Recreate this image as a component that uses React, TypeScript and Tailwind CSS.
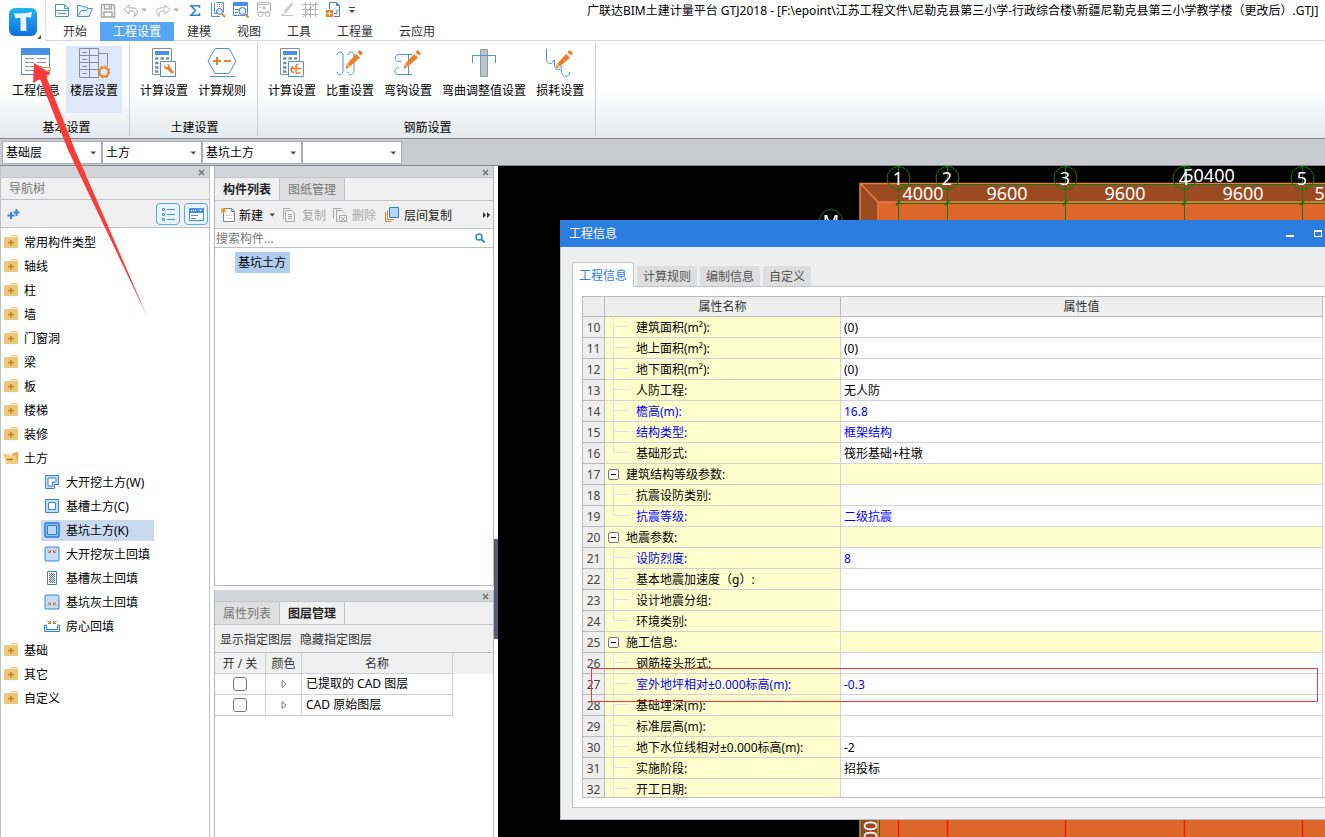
import clsx from "clsx";
import { useState } from "react";
import type { ReactNode } from "react";

const BLUE = "#4a90e2";
const ORANGE = "#f07d28";

/* ---------- quick access icons ---------- */

function Glyph({ children, size = 16 }: { children: ReactNode; size?: number }) {
  return (
    <svg width={size} height={size} viewBox={`0 0 ${size} ${size}`} fill="none" className="shrink-0" aria-hidden>
      {children}
    </svg>
  );
}

function Caret({ color = "#444" }: { color?: string }) {
  return (
    <svg width="8" height="8" viewBox="0 0 8 8" className="shrink-0" aria-hidden>
      <path d="M1.500 2.500h5.500L4.250 5.500z" fill={color} />
    </svg>
  );
}

const quickIcons: { name: string; icon: ReactNode; caret?: boolean }[] = [
  {
    name: "新建",
    icon: (
      <g stroke={BLUE}>
        <path d="M1.500 3.500h9l4 4v8h-13z" fill="#fff" />
        <path d="M10.500 3.500v4h4" />
        <path d="M1.500 9.500h13M4 12.500h8" />
      </g>
    ),
  },
  {
    name: "打开",
    icon: (
      <g stroke={BLUE}>
        <path d="M.5 15.500v-11h4l1 1.500h5v3" />
        <path d="M.5 15.500l3.500-6h5l1.500-2h5l-3.500 8z" fill="#e8f2ff" />
      </g>
    ),
  },
  {
    name: "保存",
    icon: (
      <g stroke="#a8a8a8" strokeWidth="1.500">
        <path d="M2 3.500h11l1.500 1.500v11h-13v-12z" />
        <path d="M4.500 4v4h7v-4M4 16v-5h8v5" />
        <path d="M9.500 4v3" />
      </g>
    ),
  },
  {
    name: "撤销",
    caret: true,
    icon: <path d="M6 4L1 8.500 6 13v-3c4-.5 6 .5 6 3 0 1-.5 2-1 2.500 3-2 4-4 3-6.500C13 7 10 6.500 6 7z" stroke="#a8a8a8" />,
  },
  {
    name: "恢复",
    caret: true,
    icon: <path d="M10 4l5 4.500L10 13v-3c-4-.5-6 .5-6 3 0 1 .5 2 1 2.500-3-2-4-4-3-6.500C3 7 6 6.500 10 7z" stroke="#b4b4b4" />,
  },
  {
    name: "汇总计算",
    icon: <path d="M12.500 7V4.800H4L8.500 9.500 4 14.200h8.500V12" stroke="#2f7fd8" strokeWidth="1.600" />,
  },
  {
    name: "查看计算式",
    icon: (
      <g>
        <path d="M1.500 2v13.500H10M4.500 2v10.500h3" stroke={BLUE} />
        <path d="M5.500 1.500h8v10" stroke={BLUE} />
        <path d="M7 3.500h5M7 5.500h5" stroke={ORANGE} strokeDasharray="1 1" />
        <circle cx="9.500" cy="10.500" r="3" fill="#dcecff" stroke="#4577b8" />
        <path d="M12 13l3 3" stroke={ORANGE} strokeWidth="2" />
      </g>
    ),
  },
  {
    name: "查看报表",
    icon: (
      <g>
        <path d="M.5 1.500h14v13H.5z" fill="#fff" stroke={BLUE} />
        <path d="M0 1h15v4H0z" fill={BLUE} />
        <path d="M2 8.500h4M2 11.500h3" stroke={BLUE} />
        <circle cx="9.500" cy="10" r="3.500" fill="#e4f0ff" stroke="#4577b8" />
        <path d="M12 13l3.500 3.500" stroke={ORANGE} strokeWidth="2" />
      </g>
    ),
  },
  {
    name: "云检查",
    icon: (
      <g stroke="#b8b8b8">
        <path d="M1.500 10V1.500h13V10M1.500 3.500h13M8 5v4M6 7h4M3 6.500h2" />
        <circle cx="4.500" cy="13" r="2.500" />
        <circle cx="11.500" cy="13" r="2.500" />
        <path d="M1 11.500h13" />
      </g>
    ),
  },
  {
    name: "编辑",
    icon: (
      <g stroke="#c4c4c4">
        <path d="M14 3L7.500 11l-2 1 .5-2.500L12.500 2" fill="#d4d4d4" />
        <path d="M3 14.500h11M5 12.500l-3 2" />
      </g>
    ),
  },
  {
    name: "轴网",
    icon: (
      <path d="M3.500 1v15M8.500 1v15M13.500 1v15M0 3.500h16M0 8.500h16M0 13.500h16M1 16l6-8 8-6" stroke="#b4b4b4" />
    ),
  },
  {
    name: "新增图纸",
    icon: (
      <g>
        <path d="M4.500 8V1.500h7l3 3v11H9" stroke="#4a7cb0" />
        <path d="M11.500 1.500v3h3" fill={BLUE} stroke={BLUE} />
        <path d="M12 8.500v4h-3" stroke="#4a7cb0" />
        <rect x="1" y="9" width="7" height="7" fill={ORANGE} />
        <path d="M4.500 10v5M2 12.500h5" stroke="#fff" />
      </g>
    ),
  },
];

/* ---------- ribbon icons, 32 x 32 ---------- */

const pencil = (
  <g>
    <path d="M13 17l9-10 4 3.500-10 9z" fill={ORANGE} />
    <path d="M11.500 22l1-4.500 3 2.500z" fill={ORANGE} />
    <path d="M23.500 5.500l2-2.500 3.500 3-2 2.500z" fill={ORANGE} />
  </g>
);

const calculator = (
  <g>
    <path d="M4.500 1.500h19v26h-19z" stroke="#80929c" fill="#fff" />
    <path d="M7 4h14v4H7z" fill={BLUE} />
    <path d="M7 11.500h14M7 16h14M7 20.500h14M7 24.500h14" stroke="#80929c" strokeWidth="2.500" strokeDasharray="3.500 2" />
    <path d="M12.500 14.500h15v15h-15z" fill="#fff" stroke={BLUE} />
  </g>
);

const ribbonIcons: Record<string, ReactNode> = {
  info: (
    <g>
      <path d="M1.500 3.500h28v24h-28z" fill="#fff" stroke={BLUE} />
      <path d="M1 1h29v7H1z" fill="#4a90e2" />
      <path d="M5 11.500h9M5 15.500h9M5 19.500h9M5 23.500h9M17 11.500h9M17 15.500h9M17 19.500h5" stroke="#8c9aa4" />
      <path d="M22 20.500h8v3h-2v6h-6z" fill="#fff" stroke="#e8862f" />
    </g>
  ),
  floor: (
    <g>
      <path d="M1.500 1.500h19v29h-19zM1.500 8.500h19M1.500 15.500h19M1.500 22.500h19M11.500 1.500v29" stroke="#80929c" />
      <path d="M4 5.500h5M4 12.500h5M4 19.500h5M4 26.500h5" stroke="#80929c" />
      <path d="M20.500 6.500h9v13" stroke="#80929c" />
      <circle cx="26" cy="25" r="4.500" stroke="#e8862f" strokeWidth="2" fill="#dfe9f8" />
      <circle cx="26" cy="25" r="5.500" stroke="#e8862f" strokeWidth="2" strokeDasharray="2 2.300" />
    </g>
  ),
  calcWrench: (
    <g>
      {calculator}
      <path d="M16 18l2.500 2.500 2-2-2-1.500c2-.5 4 1 3.500 3.500l4 4.500-2 2-4.500-4.500c-2.500.5-4-1.500-3.500-4.500z" fill={ORANGE} />
    </g>
  ),
  rule: (
    <g>
      <path d="M9 1.500h14l7 12.500-7 12.500H9L2 14z" fill="#fff" stroke={BLUE} />
      <path d="M7 14h8M11 10v8M18 14h7" stroke={ORANGE} strokeWidth="2" />
      <path d="M4 29.500h25" stroke={BLUE} />
    </g>
  ),
  calcHook: (
    <g>
      {calculator}
      <path d="M15 21.500h10.500M17 19l-2 2.500c0 3 1.500 4 3 4M22.500 17.500c-2-.5-2.500.5-2.500 2v5.500c0 2 3 2 4 0" stroke={ORANGE} strokeWidth="1.500" />
    </g>
  ),
  weight: (
    <g>
      <path d="M3 8c0-4 6-4 6 0v15c0 6-6 6-6 2M14 8c0-4 6-4 6 0v15c0 6-6 6-6 2" stroke={BLUE} />
      {pencil}
    </g>
  ),
  hook: (
    <g>
      <path d="M20 7.500H7c-5 0-5 7 0 7h2M20 27.500H7c-6 0-5-7 0-7M16.500 8v19" stroke={BLUE} />
      {pencil}
    </g>
  ),
  bend: (
    <g>
      <path d="M12.500 2.500h7v27h-7z" fill="#bcc4c8" stroke="#8c9aa4" />
      <path d="M4.500 16V8.500h23V16" stroke={BLUE} />
    </g>
  ),
  loss: (
    <g>
      <path d="M2.500 2v10c0 6 7 6 7 1M10.500 13v5c0 6 7 6 7 1M17.500 22v2c0 7 8 7 8 1" stroke={BLUE} />
      {pencil}
    </g>
  ),
};

const ribbonGroups = [
  {
    title: "基本设置",
    items: [
      { label: "工程信息", icon: "info" },
      { label: "楼层设置", icon: "floor", active: true },
    ],
  },
  {
    title: "土建设置",
    items: [
      { label: "计算设置", icon: "calcWrench" },
      { label: "计算规则", icon: "rule" },
    ],
  },
  {
    title: "钢筋设置",
    items: [
      { label: "计算设置", icon: "calcHook" },
      { label: "比重设置", icon: "weight" },
      { label: "弯钩设置", icon: "hook" },
      { label: "弯曲调整值设置", icon: "bend" },
      { label: "损耗设置", icon: "loss" },
    ],
  },
];

const menuTabs = ["开始", "工程设置", "建模", "视图", "工具", "工程量", "云应用"];

function Header() {
  const [tab, setTab] = useState("工程设置");
  return (
    <header>
      <div className="flex h-[41px] bg-white">
        <div className="relative w-[46px] shrink-0 border-r border-gray-200 pt-2 pl-2">
          <svg width="30" height="30" viewBox="0 0 30 30" aria-label="GTJ2018">
            <defs>
              <linearGradient id="logo" x1="0" y1="0" x2="0" y2="1">
                <stop offset="0" stopColor="#23b3f5" />
                <stop offset="1" stopColor="#0f6fdc" />
              </linearGradient>
            </defs>
            <rect x="1" width="28" height="28" rx="6" fill="url(#logo)" />
            <path d="M6 5c4 1 14 0 18-1l-1 5.500c-1.500-.5-3-.5-5 0l.5 13.500h-6L12.500 10c-1.500 0-3.500 0-5 .5z" fill="#e9f6ff" />
          </svg>
          <svg width="4" height="4" viewBox="0 0 4 4" className="absolute right-1 bottom-[2px]" aria-hidden>
            <path d="M4 0v4H0z" fill="#555" />
          </svg>
        </div>
        <div className="flex min-w-0 flex-1 flex-col">
          <div className="flex h-[22px] items-start pl-2">
            <div className="flex w-[533px] shrink-0 gap-[7px] pt-px">
              {quickIcons.map((q) => (
                <button key={q.name} type="button" title={q.name} className="flex items-center gap-px">
                  <svg width="16" height="18" viewBox="0 0 16 18" fill="none" aria-hidden>
                    {q.icon}
                  </svg>
                  {q.caret && <Caret color="#aaa" />}
                </button>
              ))}
              <button type="button" title="更多" className="flex items-center">
                <svg width="8" height="8" viewBox="0 0 8 8" aria-hidden>
                  <path d="M1 1.500h6" stroke="#444" />
                  <path d="M1 4h6L4 7z" fill="#444" />
                </svg>
              </button>
            </div>
            <h1 className="truncate overflow-clip pt-[3px] leading-4 text-clip whitespace-nowrap">
              广联达BIM土建计量平台 GTJ2018 - [F:\epoint\江苏工程文件\尼勒克县第三小学-行政综合楼\新疆尼勒克县第三小学教学楼（更改后）.GTJ]
            </h1>
          </div>
          <nav className="flex h-[19px] border-b border-[#d5d7da] pl-1">
            {menuTabs.map((t) => (
              <button
                key={t}
                type="button"
                onClick={() => setTab(t)}
                className={clsx("h-[19px] px-[13px] leading-[19px]", tab === t ? "bg-[#57a5f7] text-white" : "text-[#333]")}
              >
                {t}
              </button>
            ))}
          </nav>
        </div>
      </div>

      <div className="flex h-[98px] border-b border-[#85898d] bg-linear-to-b from-white from-50% to-[#e6eaec] pl-[2px]">
        {ribbonGroups.map((g) => (
          <section key={g.title} className="my-[2px] flex flex-col border-r border-[#cdd0d3] pt-[3px] pr-[5px] pl-[6px]">
            <div className="flex gap-[2px] pr-[2px]">
              {g.items.map((it) => (
                <button
                  key={it.icon}
                  type="button"
                  className={clsx("flex h-[67px] flex-col items-center px-1 pt-px", it.active && "bg-[#dde8f8]")}
                >
                  <svg width="32" height="32" viewBox="0 0 32 32" fill="none" aria-hidden>
                    {ribbonIcons[it.icon]}
                  </svg>
                  <span className="mt-1 leading-4 whitespace-nowrap">{it.label}</span>
                </button>
              ))}
            </div>
            <p className="mt-[7px] pl-px text-center leading-4">{g.title}</p>
          </section>
        ))}
      </div>
    </header>
  );
}

const filters = [
  { label: "楼层", value: "基础层" },
  { label: "构件大类", value: "土方" },
  { label: "构件类型", value: "基坑土方" },
  { label: "构件", value: "" },
];

function FilterBar() {
  return (
    <div className="flex h-[27px] border-b border-[#85898d] bg-[#c9cbd0] pt-[2px] pl-[2px]">
      {filters.map((f) => (
        <div key={f.label} className="relative h-[23px] w-[100px]">
          <select aria-label={f.label} className="h-full w-full appearance-none border border-[#a9acb2] bg-white pl-[3px]">
            <option>{f.value}</option>
          </select>
          <span className="pointer-events-none absolute top-2 right-[5px]">
            <Caret />
          </span>
        </div>
      ))}
    </div>
  );
}

function DockBar() {
  return (
    <div className="flex h-3 shrink-0 items-center justify-end border-b border-[#c2c5ca] bg-[#d3d5da] pt-px pr-1">
      <button type="button" aria-label="关闭">
        <svg width="7" height="7" viewBox="0 0 7 7" className="block" aria-hidden>
          <path d="M1 1l5 5M6 1L1 6" stroke="#777" strokeWidth="1.500" />
        </svg>
      </button>
    </div>
  );
}

/* ---------- navigation tree ---------- */

function Folder({ open }: { open?: boolean }) {
  return open ? (
    <Glyph>
      <path d="M10 3l5.500-1-1 12H5z" fill="#e3ad50" />
      <path d="M0 4h6l1 1.500h6l1.500 8.500H3z" fill="#f3cd83" />
      <path d="M4 9.500h6" stroke="#a67c1e" strokeWidth="1.500" />
    </Glyph>
  ) : (
    <Glyph>
      <path d="M8 1h6l1 1.500H8z" fill="#f1cb80" />
      <rect x="1" y="3" width="14" height="11" rx="1" fill="#efc779" />
      <path d="M8 6v5.500M5 8.700h6" stroke="#c08f2c" strokeWidth="1.800" />
    </Glyph>
  );
}

const inward = "M3.500 3.500l3 3M6.500 4v2.500H4M12.500 3.500l-3 3M9.500 4v2.500H12";

const earthwork: { label: string; icon: ReactNode }[] = [
  {
    label: "大开挖土方(W)",
    icon: (
      <g stroke="#3b83d4" fill="#c5dffa">
        <path d="M1.500 1.500h13v9h-4v4h-9z" />
        <path d="M4 4h8v4H8.500v4H4z" fill="#fff" />
      </g>
    ),
  },
  {
    label: "基槽土方(C)",
    icon: (
      <g stroke="#3b83d4" fill="#c5dffa">
        <path d="M1.500 1.500h13v13h-13z" />
        <path d="M4.500 4.500h7v7h-7z" fill="#fff" />
      </g>
    ),
  },
  {
    label: "基坑土方(K)",
    icon: (
      <g stroke="#2f7dd6" fill="#8fc0f5">
        <rect x="1" y="1" width="14" height="14" rx="1" strokeWidth="1.500" />
        <path d="M3.500 3.500h9v9h-9z" fill="#b9dafc" />
      </g>
    ),
  },
  {
    label: "大开挖灰土回填",
    icon: (
      <g>
        <rect x="1" y="1" width="14" height="14" rx="1" fill="#c5dffa" stroke="#3b83d4" />
        <path d={inward} stroke="#d96c2c" />
      </g>
    ),
  },
  {
    label: "基槽灰土回填",
    icon: (
      <g>
        <path d="M3.500 1.500h9v13h-9z" fill="#fff" stroke="#3b83d4" />
        <path d="M5.500 3v10M7.500 3v10M9.500 3v10" stroke="#456d9e" strokeDasharray="1 1" />
        <path d="M6.500 4v9M8.500 4v9M10.500 4v9" stroke="#456d9e" strokeDasharray="1 1" />
      </g>
    ),
  },
  {
    label: "基坑灰土回填",
    icon: (
      <g>
        <rect x="1" y="1" width="14" height="14" rx="1" fill="#c5dffa" stroke="#3b83d4" />
        <path d="M3.500 12l3-3M4 9h2.500v2.500M12.500 12l-3-3M12 9H9.500v2.500" stroke="#d96c2c" />
      </g>
    ),
  },
  {
    label: "房心回填",
    icon: (
      <g>
        <path d="M.5 7v6.500h15V7h-2v4.500h-11V7z" fill="#dcecff" stroke="#3b83d4" />
        <path d="M3.500 2.500l3 3M6.500 3v2.500H4M12.500 2.500l-3 3M9.500 3v2.500H12" stroke="#d96c2c" />
      </g>
    ),
  },
];

const categories = ["常用构件类型", "轴线", "柱", "墙", "门窗洞", "梁", "板", "楼梯", "装修", "土方", "基础", "其它", "自定义"];

function NavTree() {
  const [selected, setSelected] = useState("基坑土方(K)");
  return (
    <aside className="flex w-[210px] shrink-0 flex-col border-x border-[#bfc2c8] bg-white">
      <DockBar />
      <h2 className="h-[22px] shrink-0 border-b border-[#bfc2c8] bg-[#f0f0f0] pl-2 leading-[22px] text-[#777]">导航树</h2>
      <div className="flex h-7 shrink-0 items-center gap-1 border-b border-[#bfc2c8] bg-[#f0f0f0] pr-px pl-[6px]">
        <button type="button" aria-label="展开" className="mr-auto">
          <Glyph>
            <path d="M4 6v7M.5 9.500h7M9.500 3v7M6.500 6.500h6" stroke="#3b83d4" strokeWidth="2" />
          </Glyph>
        </button>
        <button type="button" aria-label="列表视图" className="flex h-[22px] w-6 items-center justify-center rounded-sm border border-[#58a6f0] bg-[#eaf4ff]">
          <Glyph>
            <path d="M2.500 2.500h2v2h-2zM2.500 7.500h2v2h-2zM2.500 12.500h2v2h-2zM7 3.500h8M7 8.500h8M7 13.500h8" stroke={BLUE} />
          </Glyph>
        </button>
        <button type="button" aria-label="窗口视图" className="flex h-[22px] w-6 items-center justify-center rounded-sm border border-[#58a6f0] bg-[#eaf4ff]">
          <Glyph>
            <path d="M1.500 2.500h14v12h-14z" fill="#fff" stroke={BLUE} />
            <path d="M1 2h15v5H1z" fill={BLUE} />
            <path d="M3 4.500h6" stroke="#fff" strokeDasharray="1 1" />
            <path d="M11 3.500h3l-1.500 2z" fill="#fff" />
            <path d="M3 9.500h7M3 12.500h5" stroke={BLUE} />
          </Glyph>
        </button>
      </div>
      <ul className="min-h-0 flex-1 overflow-hidden pt-[2px]">
        {categories.map((c) => (
          <li key={c}>
            <button type="button" className="flex h-6 items-center gap-[5px] pl-[2px] whitespace-nowrap">
              <Folder open={c === "土方"} />
              <span className="pt-[2px]">{c}</span>
            </button>
            {c === "土方" && (
              <ul className="pl-10">
                {earthwork.map((e) => (
                  <li key={e.label} className="flex h-6 items-center">
                    <button
                      type="button"
                      onClick={() => setSelected(e.label)}
                      className={clsx(
                        "flex h-[21px] min-w-[113px] items-center gap-[6px] pl-[3px] whitespace-nowrap",
                        selected === e.label && "bg-[#c9d9f0]",
                      )}
                    >
                      <Glyph>{e.icon}</Glyph>
                      <span className="pt-[2px]">{e.label}</span>
                    </button>
                  </li>
                ))}
              </ul>
            )}
          </li>
        ))}
      </ul>
    </aside>
  );
}

/* ---------- component list and layers ---------- */

function PanelTabs({ tabs, active }: { tabs: string[]; active: string }) {
  return (
    <div className="flex h-[23px] shrink-0 border-b border-[#bfc2c8] bg-[#f0f0f0]">
      {tabs.map((t) => (
        <button
          key={t}
          type="button"
          className={clsx(
            "w-[65px] border-r border-[#bfc2c8] pt-[2px]",
            t === active ? "font-bold text-[#222]" : "bg-[#dfdfe0] text-[#777]",
          )}
        >
          {t}
        </button>
      ))}
    </div>
  );
}

function ComponentPanel() {
  return (
    <section className="flex min-h-0 flex-1 flex-col border-x border-b border-[#b4b6ba] bg-white">
      <DockBar />
      <PanelTabs tabs={["构件列表", "图纸管理"]} active="构件列表" />
      <div className="flex h-7 shrink-0 items-center border-b border-[#bfc2c8] bg-[#f0f0f0] pr-[2px] pl-[5px] whitespace-nowrap">
        <button type="button" className="mr-[6px] flex items-center gap-[3px]">
          <Glyph>
            <path d="M3.500 1.500h8l3 3v10h-11z" fill="#fff" stroke="#78858f" />
            <path d="M11.500 1.500v3h3" stroke="#78858f" />
            <path d="M6 8.500h6M6 11.500h6" stroke="#d3d8dc" />
            <path d="M1 1l5 5M6 1L1 6M3.500 1v5M1 3.500h5" stroke="#f0941f" />
          </Glyph>
          <span className="pt-[2px]">新建</span>
          <span className="pl-[2px]">
            <Caret />
          </span>
        </button>
        <button type="button" disabled className="mr-[6px] flex items-center gap-1 text-[#a9a9a9]">
          <Glyph>
            <path d="M1.500 12.500v-11h7" stroke="#a9a9a9" />
            <path d="M3.500 3.500h6l3 3v8h-9zM6 7.500h4M6 9.500h4M6 11.500h4" stroke="#a9a9a9" />
          </Glyph>
          <span className="pt-[2px]">复制</span>
        </button>
        <button type="button" disabled className="mr-2 flex items-center gap-1 text-[#a9a9a9]">
          <Glyph>
            <path d="M1.500 11.500v-10h8M4 3.500h6l3 3M4.500 3.500v11h2" stroke="#a9a9a9" />
            <path d="M7.500 8.500h7v6h-7zM9 10l4 4M13 10l-4 4" stroke="#a9a9a9" />
          </Glyph>
          <span className="pt-[2px]">删除</span>
        </button>
        <button type="button" className="mr-auto flex items-center gap-1 text-[#222]">
          <Glyph>
            <path d="M1.500 5v9.500h6" stroke={ORANGE} />
            <path d="M3.500 3v9.500h6" stroke={ORANGE} />
            <path d="M5.500.5h9v10h-9z" fill="#b5d6fb" stroke="#3b83d4" />
          </Glyph>
          <span className="pt-[2px]">层间复制</span>
        </button>
        <button type="button" aria-label="更多">
          <svg width="9" height="8" viewBox="0 0 9 8" aria-hidden>
            <path d="M1 1l3 3-3 3zM5 1l3 3-3 3z" fill="#333" />
          </svg>
        </button>
      </div>
      <label className="flex h-[19px] shrink-0 items-center border-b border-[#bfc2c8] pr-2 pl-px">
        <input aria-label="搜索构件" placeholder="搜索构件..." className="min-w-0 flex-1 pt-[2px] outline-none placeholder:text-[#777]" />
        <svg width="10" height="10" viewBox="0 0 10 10" fill="none" aria-hidden>
          <circle cx="4" cy="4" r="3" stroke="#2f8fc9" strokeWidth="1.500" />
          <path d="M6 6l3.500 3.500" stroke="#2f8fc9" strokeWidth="2" />
        </svg>
      </label>
      <ul className="pt-1 pl-5">
        <li className="h-[21px] w-[55px] bg-[#b1ccee] pl-[3px] leading-[22px]">基坑土方</li>
      </ul>
    </section>
  );
}

const layers = ["已提取的 CAD 图层", "CAD 原始图层"];

function LayerPanel() {
  const cell = "border-r border-b border-[#cfd0d2] p-0";
  return (
    <section className="flex h-[247px] shrink-0 flex-col border-x border-[#b4b6ba] bg-white">
      <DockBar />
      <PanelTabs tabs={["属性列表", "图层管理"]} active="图层管理" />
      <div className="flex h-7 shrink-0 items-center gap-2 border-b border-[#bfc2c8] bg-[#f0f0f0] pt-[2px] pl-[5px] text-[#333]">
        <button type="button">显示指定图层</button>
        <button type="button">隐藏指定图层</button>
      </div>
      <div className="bg-linear-to-b from-[#f0f0f0] from-[21px] to-white to-[21px]">
        <table className="w-[238px] table-fixed border-separate border-spacing-0 bg-white">
          <thead>
            <tr className="h-[21px] bg-[#f0f0f0] text-[#333]">
              <th className={`w-[51px] pt-px! font-normal ${cell}`}>开 / 关</th>
              <th className={`w-9 pt-px! font-normal ${cell}`}>颜色</th>
              <th className={`pt-px! font-normal ${cell}`}>名称</th>
            </tr>
          </thead>
          <tbody>
            {layers.map((l) => (
              <tr key={l} className="h-[21px]">
                <td className={cell}>
                  <input
                    type="checkbox"
                    aria-label={l}
                    className="mx-auto block h-[14px] w-[14px] appearance-none rounded-[3px] border border-[#777] bg-white checked:bg-[#4a90e2]"
                  />
                </td>
                <td className={cell}>
                  <svg width="6" height="8" viewBox="0 0 6 8" fill="none" className="mx-auto block" aria-hidden>
                    <path d="M1 .5l4 3.500-4 3.500z" stroke="#777" />
                  </svg>
                </td>
                <td className={`pl-1! whitespace-nowrap ${cell}`}>{l}</td>
              </tr>
            ))}
          </tbody>
        </table>
      </div>
    </section>
  );
}

/* ---------- model view ---------- */

const axes = [
  { x: 898, n: "1" },
  { x: 947, n: "2" },
  { x: 1065, n: "3" },
  { x: 1184, n: "4" },
  { x: 1302, n: "5" },
];

const spans = [
  { x: 923, t: "4000" },
  { x: 1007, t: "9600" },
  { x: 1125, t: "9600" },
  { x: 1243, t: "9600" },
  { x: 1335, t: "5000" },
];

function ModelView() {
  return (
    <svg className="absolute inset-0 h-full w-full" fill="none" aria-hidden>
      <g transform="translate(-498 -166)">
        <path d="M860 183h900v700H860z" fill="#9c4a21" />
        <path d="M878 202h900v700H878z" fill="#dd672b" />
        <path d="M1700 183.500H860v700M860 183l18 19v700M878 202h900" stroke="#e57e48" strokeWidth="1.500" />
        <path d="M898 184.500h800M898 203.500h800M861.500 800v80M879.500 800v80" stroke="#177a10" />
        {axes.map((a) => (
          <g key={a.n}>
            <path d={`M${a.x}.500 167v60`} stroke="#177a10" />
            <path d={`M${a.x}.500 819v60`} stroke="#f51a10" strokeWidth="1.500" />
            <circle cx={a.x + 0.5} cy="178" r="11.500" stroke="#0c7d0c" />
            <path d={`M${a.x - 2} 205l4-4`} stroke="#0c7d0c" strokeWidth="2" />
          </g>
        ))}
        <circle cx="831" cy="221" r="11.500" stroke="#0c7d0c" />
        <g fill="#fff" fontSize="18" textAnchor="middle">
          {axes.map((a) => (
            <text key={a.n} x={a.x} y="185">
              {a.n}
            </text>
          ))}
          {spans.map((s) => (
            <text key={s.x} x={s.x} y="200">
              {s.t}
            </text>
          ))}
          <text x="1209" y="182">
            50400
          </text>
          <text x="831" y="228">
            M
          </text>
          <text transform="translate(877 831) rotate(-90)">00</text>
        </g>
      </g>
    </svg>
  );
}

/* ---------- project info dialog ---------- */

type Prop = { name: string; value?: string; edited?: boolean; group?: boolean; last?: boolean };

const properties: Prop[] = [
  { name: "建筑面积(m²):", value: "(0)" },
  { name: "地上面积(m²):", value: "(0)" },
  { name: "地下面积(m²):", value: "(0)" },
  { name: "人防工程:", value: "无人防" },
  { name: "檐高(m):", value: "16.8", edited: true },
  { name: "结构类型:", value: "框架结构", edited: true },
  { name: "基础形式:", value: "筏形基础+柱墩", last: true },
  { name: "建筑结构等级参数:", group: true },
  { name: "抗震设防类别:" },
  { name: "抗震等级:", value: "二级抗震", edited: true, last: true },
  { name: "地震参数:", group: true },
  { name: "设防烈度:", value: "8", edited: true },
  { name: "基本地震加速度（g）:" },
  { name: "设计地震分组:" },
  { name: "环境类别:", last: true },
  { name: "施工信息:", group: true },
  { name: "钢筋接头形式:" },
  { name: "室外地坪相对±0.000标高(m):", value: "-0.3", edited: true },
  { name: "基础埋深(m):" },
  { name: "标准层高(m):" },
  { name: "地下水位线相对±0.000标高(m):", value: "-2" },
  { name: "实施阶段:", value: "招投标" },
  { name: "开工日期:" },
];

function PropertyName({ row }: { row: Prop }) {
  if (row.group) {
    return (
      <span className="flex h-5 items-center gap-[7px] pl-[3px]">
        <button type="button" aria-label="折叠" className="flex h-[11px] w-[11px] items-center justify-center rounded-[2px] border border-[#777] bg-white">
          <span className="h-px w-[5px] bg-black" />
        </button>
        <span className="pt-[2px]">{row.name}</span>
      </span>
    );
  }
  return (
    <span className="flex h-5 items-center gap-[7px] pl-2">
      <svg width="16" height="20" viewBox="0 0 16 20" fill="none" aria-hidden>
        <path d={row.last ? "M.5 0v9.500H16" : "M.5 0v20M.5 9.500H16"} stroke="#e0e0dc" />
      </svg>
      <span className="pt-[2px]">{row.name}</span>
    </span>
  );
}

function ProjectDialog() {
  const [tab, setTab] = useState("工程信息");
  const cell = "border-r border-b border-[#d2d3d5] p-0";
  return (
    <div role="dialog" aria-label="工程信息" className="absolute top-[54px] right-0 bottom-[17px] left-[62px] flex flex-col border-b border-l border-[#b7bcc9] bg-[#efefef]">
      <div className="-ml-px flex h-[27px] shrink-0 items-center bg-[#2b7de1] pr-[3px] pl-[9px] text-white">
        <h2 className="mr-auto pt-px">工程信息</h2>
        <button type="button" aria-label="最小化" className="mr-[20px]">
          <svg width="8" height="8" viewBox="0 0 8 8" aria-hidden>
            <path d="M0 5h8v2H0z" fill="#fff" />
          </svg>
        </button>
        <button type="button" aria-label="最大化">
          <svg width="8" height="8" viewBox="0 0 8 8" aria-hidden>
            <path d="M0 0h8v7H0zM1 2v4h6V2z" fill="#fff" fillRule="evenodd" />
          </svg>
        </button>
      </div>
      <div className="mt-[15px] ml-[11px] flex min-h-0 flex-1 flex-col">
        <div role="tablist" className="z-10 -mb-px flex h-[25px] shrink-0 items-end gap-[3px]">
          {["工程信息", "计算规则", "编制信息", "自定义"].map((t) => (
            <button
              key={t}
              type="button"
              role="tab"
              aria-selected={tab === t}
              onClick={() => setTab(t)}
              className={clsx(
                "rounded-t-[3px] px-[6px] pt-[2px]",
                tab === t
                  ? "h-[25px] border border-b-0 border-[#c2c4c9] bg-white text-[#2b7de1]"
                  : "mb-px h-5 bg-[#dedede] text-[#555]",
              )}
            >
              {t}
            </button>
          ))}
        </div>
        <div className="mb-[11px] flex min-h-0 flex-1 flex-col border-y border-l border-[#c2c4c9] bg-white pt-[9px] pb-[9px] pl-[9px]">
          <div className="min-h-0 flex-1 overflow-hidden border-y border-l border-[#b9bbbf] pr-[2px]">
            <table className="w-full table-fixed border-separate border-spacing-0">
              <thead>
                <tr className="h-5 bg-[#efefef] text-[#333]">
                  <th className={`w-[22px] border-[#b9bbbf]! font-normal ${cell}`} aria-label="序号" />
                  <th className={`w-[236px] border-[#b9bbbf]! pt-px! font-normal ${cell}`}>属性名称</th>
                  <th className={`border-[#b9bbbf]! pt-px! font-normal ${cell}`}>属性值</th>
                </tr>
              </thead>
              <tbody>
                {properties.map((p, i) => (
                  <tr key={p.name} className={clsx("h-[21px]", p.edited && "text-[#0000ff]")}>
                    <td className={`border-[#b9bbbf]! bg-[#efefef] pt-[2px]! text-center text-[#444] ${cell}`}>{i + 10}</td>
                    <td className={`bg-[#ffffce] whitespace-nowrap ${cell}`}>
                      <PropertyName row={p} />
                    </td>
                    <td className={clsx(cell, "pt-[2px]! pl-[3px]!", p.group && "bg-[#ffffce]")}>{p.value}</td>
                  </tr>
                ))}
              </tbody>
            </table>
          </div>
        </div>
      </div>
      {/* highlight frame around the ground level row */}
      <div className="pointer-events-none absolute top-[448px] right-[7px] left-[30px] h-[34px] border border-[#f83838]" />
    </div>
  );
}

export default function App() {
  return (
    <div className="relative flex h-screen flex-col overflow-hidden bg-white font-['Noto_Sans','Noto_Sans_CJK_SC',sans-serif] text-[12px] leading-4 text-black">
      <Header />
      <FilterBar />
      <main className="flex min-h-0 flex-1">
        <NavTree />
        <div className="ml-1 flex w-[280px] shrink-0 flex-col gap-1">
          <ComponentPanel />
          <LayerPanel />
        </div>
        <div className="flex w-1 shrink-0 flex-col">
          <div className="mt-[373px] h-[100px] bg-[#56606d]" />
        </div>
        <div className="relative min-w-0 flex-1 overflow-hidden bg-black">
          <ModelView />
          <ProjectDialog />
        </div>
      </main>
      {/* pointer arrow towards the project info button */}
      <svg width="160" height="320" viewBox="0 0 160 320" className="pointer-events-none absolute top-0 left-0" aria-hidden>
        <path d="M34 63L50 73 46 76 75 150 147 316 68 150 40 79 33 83z" fill="#fb3b38" />
      </svg>
    </div>
  );
}
